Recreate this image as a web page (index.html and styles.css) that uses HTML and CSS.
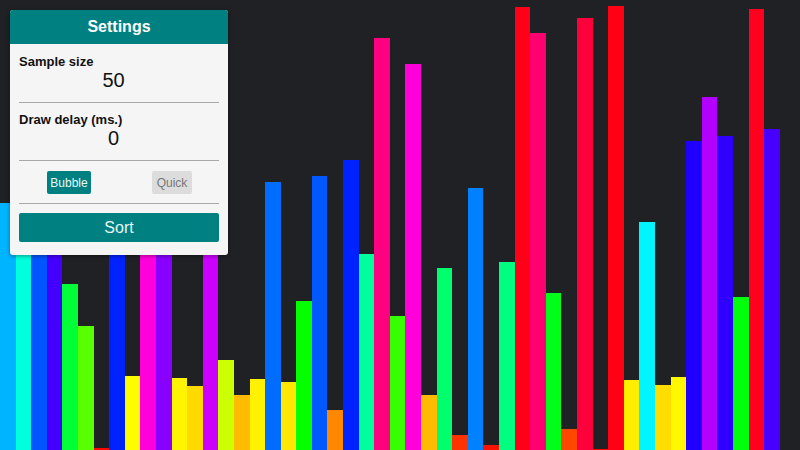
FILE: index.html
```html
<!DOCTYPE html>
<html>
<head>
<meta charset="utf-8">
<link rel="stylesheet" href="styles.css">
</head>
<body>
<div class="chart">
<div class="bar" style="height:247px;background:hsl(197.6,100%,50%)"></div>
<div class="bar" style="height:215px;background:hsl(172,100%,50%)"></div>
<div class="bar" style="height:275px;background:hsl(220,100%,50%)"></div>
<div class="bar" style="height:320px;background:hsl(256,100%,50%)"></div>
<div class="bar" style="height:166px;background:hsl(132.8,100%,50%)"></div>
<div class="bar" style="height:124px;background:hsl(99.2,100%,50%)"></div>
<div class="bar" style="height:2px;background:hsl(1.6,100%,50%)"></div>
<div class="bar" style="height:290px;background:hsl(232,100%,50%)"></div>
<div class="bar" style="height:74px;background:hsl(59.2,100%,50%)"></div>
<div class="bar" style="height:385px;background:hsl(308,100%,50%)"></div>
<div class="bar" style="height:340px;background:hsl(272,100%,50%)"></div>
<div class="bar" style="height:72px;background:hsl(57.6,100%,50%)"></div>
<div class="bar" style="height:64px;background:hsl(51.2,100%,50%)"></div>
<div class="bar" style="height:360px;background:hsl(288,100%,50%)"></div>
<div class="bar" style="height:90px;background:hsl(72,100%,50%)"></div>
<div class="bar" style="height:55px;background:hsl(44,100%,50%)"></div>
<div class="bar" style="height:71px;background:hsl(56.8,100%,50%)"></div>
<div class="bar" style="height:268px;background:hsl(214.4,100%,50%)"></div>
<div class="bar" style="height:68px;background:hsl(54.4,100%,50%)"></div>
<div class="bar" style="height:149px;background:hsl(119.2,100%,50%)"></div>
<div class="bar" style="height:274px;background:hsl(219.2,100%,50%)"></div>
<div class="bar" style="height:40px;background:hsl(32,100%,50%)"></div>
<div class="bar" style="height:290px;background:hsl(232,100%,50%)"></div>
<div class="bar" style="height:196px;background:hsl(156.8,100%,50%)"></div>
<div class="bar" style="height:412px;background:hsl(329.6,100%,50%)"></div>
<div class="bar" style="height:134px;background:hsl(107.2,100%,50%)"></div>
<div class="bar" style="height:386px;background:hsl(308.8,100%,50%)"></div>
<div class="bar" style="height:55px;background:hsl(44,100%,50%)"></div>
<div class="bar" style="height:182px;background:hsl(145.6,100%,50%)"></div>
<div class="bar" style="height:15px;background:hsl(12,100%,50%)"></div>
<div class="bar" style="height:262px;background:hsl(209.6,100%,50%)"></div>
<div class="bar" style="height:5px;background:hsl(4,100%,50%)"></div>
<div class="bar" style="height:188px;background:hsl(150.4,100%,50%)"></div>
<div class="bar" style="height:443px;background:hsl(354.4,100%,50%)"></div>
<div class="bar" style="height:417px;background:hsl(333.6,100%,50%)"></div>
<div class="bar" style="height:157px;background:hsl(125.6,100%,50%)"></div>
<div class="bar" style="height:21px;background:hsl(16.8,100%,50%)"></div>
<div class="bar" style="height:432px;background:hsl(345.6,100%,50%)"></div>
<div class="bar" style="height:1px;background:hsl(0.8,100%,50%)"></div>
<div class="bar" style="height:444px;background:hsl(355.2,100%,50%)"></div>
<div class="bar" style="height:70px;background:hsl(56,100%,50%)"></div>
<div class="bar" style="height:228px;background:hsl(182.4,100%,50%)"></div>
<div class="bar" style="height:65px;background:hsl(52,100%,50%)"></div>
<div class="bar" style="height:73px;background:hsl(58.4,100%,50%)"></div>
<div class="bar" style="height:309px;background:hsl(247.2,100%,50%)"></div>
<div class="bar" style="height:353px;background:hsl(282.4,100%,50%)"></div>
<div class="bar" style="height:314px;background:hsl(251.2,100%,50%)"></div>
<div class="bar" style="height:153px;background:hsl(122.4,100%,50%)"></div>
<div class="bar" style="height:441px;background:hsl(352.8,100%,50%)"></div>
<div class="bar" style="height:321px;background:hsl(256.8,100%,50%)"></div>
</div>

<div class="panel">
  <div class="panel-header">Settings</div>
  <div class="panel-body">
    <div class="field first">
      <div class="field-label">Sample size</div>
      <div class="field-value">50</div>
    </div>
    <div class="divider"></div>
    <div class="field">
      <div class="field-label">Draw delay (ms.)</div>
      <div class="field-value">0</div>
    </div>
    <div class="divider"></div>
    <div class="algos">
      <button class="algo active">Bubble</button>
      <button class="algo quick">Quick</button>
    </div>
    <div class="divider"></div>
    <button class="sort">Sort</button>
  </div>
</div>
</body>
</html>
```

FILE: styles.css
```css
html, body {
  margin: 0;
  padding: 0;
  width: 800px;
  height: 450px;
  overflow: hidden;
  background: #202124;
  font-family: "Liberation Sans", Arial, sans-serif;
}

.chart {
  display: flex;
  align-items: flex-end;
  width: 780px;
  height: 450px;
}

.bar {
  width: 15.6px;
  flex: 0 0 15.6px;
}

.panel {
  position: absolute;
  top: 10px;
  left: 10px;
  width: 218px;
  height: 245px;
  background: #f5f5f5;
  border-radius: 3px;
  overflow: hidden;
  box-shadow: 0 1px 4px rgba(0, 0, 0, 0.4);
}

.panel-header {
  height: 34px;
  background: #008080;
  color: #ffffff;
  font-weight: bold;
  font-size: 16px;
  display: flex;
  align-items: center;
  justify-content: center;
}

.panel-body {
  padding: 0 9px;
  display: flex;
  flex-direction: column;
}

.field {
  padding-top: 9px;
}

.field.first {
  padding-top: 10px;
}

.field-label {
  font-weight: bold;
  font-size: 13px;
  line-height: 15px;
  color: #111;
}

.field-value {
  font-size: 20px;
  line-height: 22px;
  text-align: center;
  color: #111;
  margin-bottom: 11px;
  padding-right: 11px;
}

.divider {
  height: 0;
  border-top: 1px solid #a8a8a8;
}

.algos {
  display: grid;
  grid-template-columns: 1fr 1fr;
  justify-items: center;
  padding: 10px 0 9px;
}

.algo {
  font-family: "Liberation Sans", Arial, sans-serif;
  font-size: 12px;
  height: 23px;
  padding: 0 3px;
  border: none;
  border-radius: 2px;
  background: #dcdcdc;
  color: #777;
}

.algo.active {
  background: #008080;
  color: #e6f7f7;
}

.algo.quick {
  padding: 0 5px;
  margin-left: 6px;
}

.sort {
  margin-top: 9px;
  height: 29px;
  border: none;
  border-radius: 2px;
  background: #008080;
  color: #e6f7f7;
  font-family: "Liberation Sans", Arial, sans-serif;
  font-size: 16px;
}
```
